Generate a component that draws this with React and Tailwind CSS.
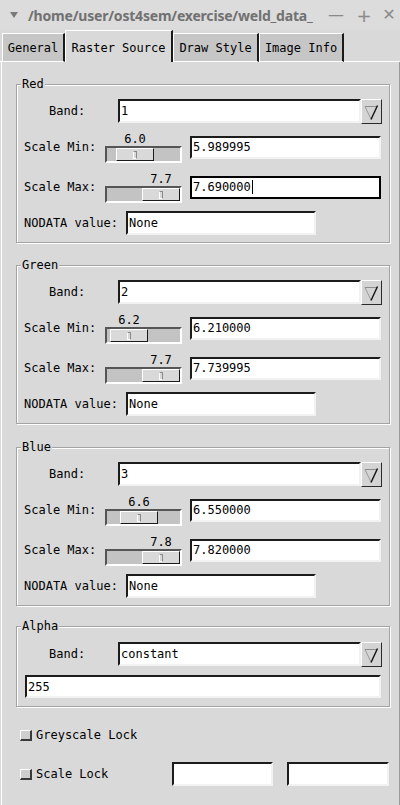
import React from 'react';

const mono = "font-['DejaVu_Sans_Mono',monospace]";

const channels = [
  {
    name: 'Red',
    band: '1',
    gap: '',
    min: { label: '6.0', off: 'ml-[9px]', value: '5.989995' },
    max: { label: '7.7', off: 'ml-[35px]', value: '7.690000', focused: true },
  },
  {
    name: 'Green',
    band: '2',
    gap: 'mt-[15px]',
    min: { label: '6.2', off: 'ml-[3px]', value: '6.210000' },
    max: { label: '7.7', off: 'ml-[35px]', value: '7.739995' },
  },
  {
    name: 'Blue',
    band: '3',
    gap: 'mt-[16px]',
    min: { label: '6.6', off: 'ml-[13px]', value: '6.550000' },
    max: { label: '7.8', off: 'ml-[35px]', value: '7.820000' },
  },
];

function Entry({ value = '', className = '', focused = false }) {
  const border = focused
    ? 'border-black'
    : 'border-t-[#1c1c1c] border-l-[#1c1c1c] border-r-[#f2f2f2] border-b-[#f2f2f2]';
  return (
    <div className={`flex items-center border-2 bg-white pl-px text-[12px] text-black ${border} ${className}`}>
      <span>{value}</span>
      {focused && <span className="ml-px h-[14px] w-px bg-black" />}
    </div>
  );
}

function DropButton() {
  return (
    <div className="flex h-[25px] w-[21px] items-center justify-center border border-t-white border-l-white border-r-[#2a2a2a] border-b-[#2a2a2a] bg-[#d4d4d4]">
      <svg width="19" height="23" viewBox="0 0 19 23">
        <path d="M3 6.5 L15 6.5" stroke="#8c8c8c" strokeWidth="1" />
        <path d="M3 6.5 L9 19" stroke="#9a9a9a" strokeWidth="1" />
        <path d="M15.5 5.5 L9 19.5" stroke="#111" strokeWidth="1.4" />
      </svg>
    </div>
  );
}

function Slider({ label, off }) {
  return (
    <div className="flex w-[77px] flex-col">
      <div className="flex h-[14px] px-[2px] leading-[14px]">
        <div className={`${off} w-[38px] text-center`}>{label}</div>
      </div>
      <div className="flex h-[17px] items-center border-2 border-t-[#555] border-l-[#555] border-r-white border-b-white bg-[#c3c3c3]">
        <div className={`${off} flex h-[13px] w-[38px] items-center justify-center border border-t-white border-l-white border-r-[#1a1a1a] border-b-[#1a1a1a] bg-[#d9d9d9]`}>
          <div className="mt-[2px] h-[8px] w-[4px] border border-t-[#8a8a8a] border-l-white border-r-[#8a8a8a] border-b-white" />
        </div>
      </div>
    </div>
  );
}

function BandRow({ value }) {
  return (
    <div className="flex h-[24px] items-center">
      <span className="ml-[32px] w-[69px]">Band:</span>
      <Entry value={value} className="h-[24px] w-[243px]" />
      <DropButton />
    </div>
  );
}

function ScaleRow({ title, s }) {
  return (
    <div className="flex h-[34px] items-center">
      <span className="ml-[7px] w-[81px]">{title}</span>
      <Slider label={s.label} off={s.off} />
      <Entry value={s.value} focused={s.focused} className="ml-[8px] h-[23px] w-[191px]" />
    </div>
  );
}

function Frame({ title, className = '', children }) {
  return (
    <fieldset className={`w-[374px] border border-[#a3a3a3] shadow-[1px_1px_0_#fff,inset_1px_1px_0_#fff] ${className}`}>
      <legend className="ml-[4px] bg-[#d9d9d9] px-px leading-[14px]">{title}</legend>
      {children}
    </fieldset>
  );
}

function Checkbox() {
  return (
    <div className="h-[11px] w-[12px] border border-r-2 border-b-2 border-t-white border-l-white border-r-[#3a3a3a] border-b-[#3a3a3a] bg-[#cfcfcf]" />
  );
}

export default function App() {
  const tabs = [
    { label: 'General', w: 'w-[63px]' },
    { label: 'Raster Source', w: 'w-[108px]', active: true },
    { label: 'Draw Style', w: 'w-[86px]' },
    { label: 'Image Info', w: 'w-[85px]' },
  ];

  return (
    <div className={`flex h-[805px] w-[400px] flex-col overflow-hidden bg-[#d9d9d9] text-[12px] text-black ${mono}`}>
      {/* window title bar */}
      <div className="flex h-[30px] items-center bg-[#dcdcdc] text-[#717171]">
        <svg className="ml-[10px]" width="8" height="6" viewBox="0 0 8 6">
          <path d="M0 0 L8 0 L4 6 Z" fill="#7a7a7a" />
        </svg>
        <span className="ml-[10px] font-['Noto_Sans',sans-serif] text-[14px] font-bold tracking-[-0.2px]">
          /home/user/ost4sem/exercise/weld_data_
        </span>
        <div className="ml-auto flex items-center font-['DejaVu_Sans',sans-serif] text-[16px] text-[#8a8a8a]">
          <span className="w-[28px] text-center">—</span>
          <span className="w-[28px] text-center text-[18px]">+</span>
          <span className="w-[22px] text-center">✕</span>
        </div>
      </div>

      {/* tabs */}
      <div className="flex h-[32px] items-end">
        <div className="h-px w-[2px] bg-white" />
        {tabs.map((t) =>
          t.active ? (
            <div
              key={t.label}
              className={`flex h-[32px] items-center justify-center border-t border-l border-r-2 border-t-white border-l-white border-r-[#1a1a1a] bg-[#d9d9d9] pt-[2px] ${t.w}`}
            >
              {t.label}
            </div>
          ) : (
            <div
              key={t.label}
              className={`flex h-[29px] items-center justify-center border-t border-l border-r-2 border-b border-t-white border-l-white border-r-[#1a1a1a] border-b-white bg-[#c6c6c6] pt-px ${t.w}`}
            >
              {t.label}
            </div>
          ),
        )}
        <div className="h-px flex-1 bg-white" />
      </div>

      {/* notebook panel */}
      <div className="ml-px flex flex-1 flex-col border-l border-r border-l-white border-r-[#9a9a9a] pl-[14px] pt-[15px]">
        {channels.map((c) => (
          <Frame key={c.name} title={c.name} className={c.gap}>
            <div className="mt-[8px] flex flex-col pb-[7px]">
              <BandRow value={c.band} />
              <div className="mt-[7px]">
                <ScaleRow title="Scale Min:" s={c.min} />
              </div>
              <div className="mt-[6px]">
                <ScaleRow title="Scale Max:" s={c.max} />
              </div>
              <div className="mt-[7px] flex h-[24px] items-center">
                <span className="ml-[7px] w-[102px]">NODATA value:</span>
                <Entry value="None" className="h-[24px] w-[190px]" />
              </div>
            </div>
          </Frame>
        ))}

        <Frame title="Alpha" className="mt-[13px]">
          <div className="mt-[9px] flex flex-col pb-[8px]">
            <BandRow value="constant" />
            <Entry value="255" className="ml-[8px] mt-[9px] h-[23px] w-[356px]" />
          </div>
        </Frame>

        <div className="-ml-[14px] mt-[18px] flex h-[20px] items-center pl-[18px]">
          <Checkbox />
          <span className="ml-[4px]">Greyscale Lock</span>
        </div>
        <div className="-ml-[14px] mt-[17px] flex h-[24px] items-center pl-[18px]">
          <Checkbox />
          <span className="ml-[4px] w-[136px]">Scale Lock</span>
          <Entry className="h-[24px] w-[101px]" />
          <Entry className="ml-[14px] h-[24px] w-[102px]" />
        </div>
      </div>
    </div>
  );
}
